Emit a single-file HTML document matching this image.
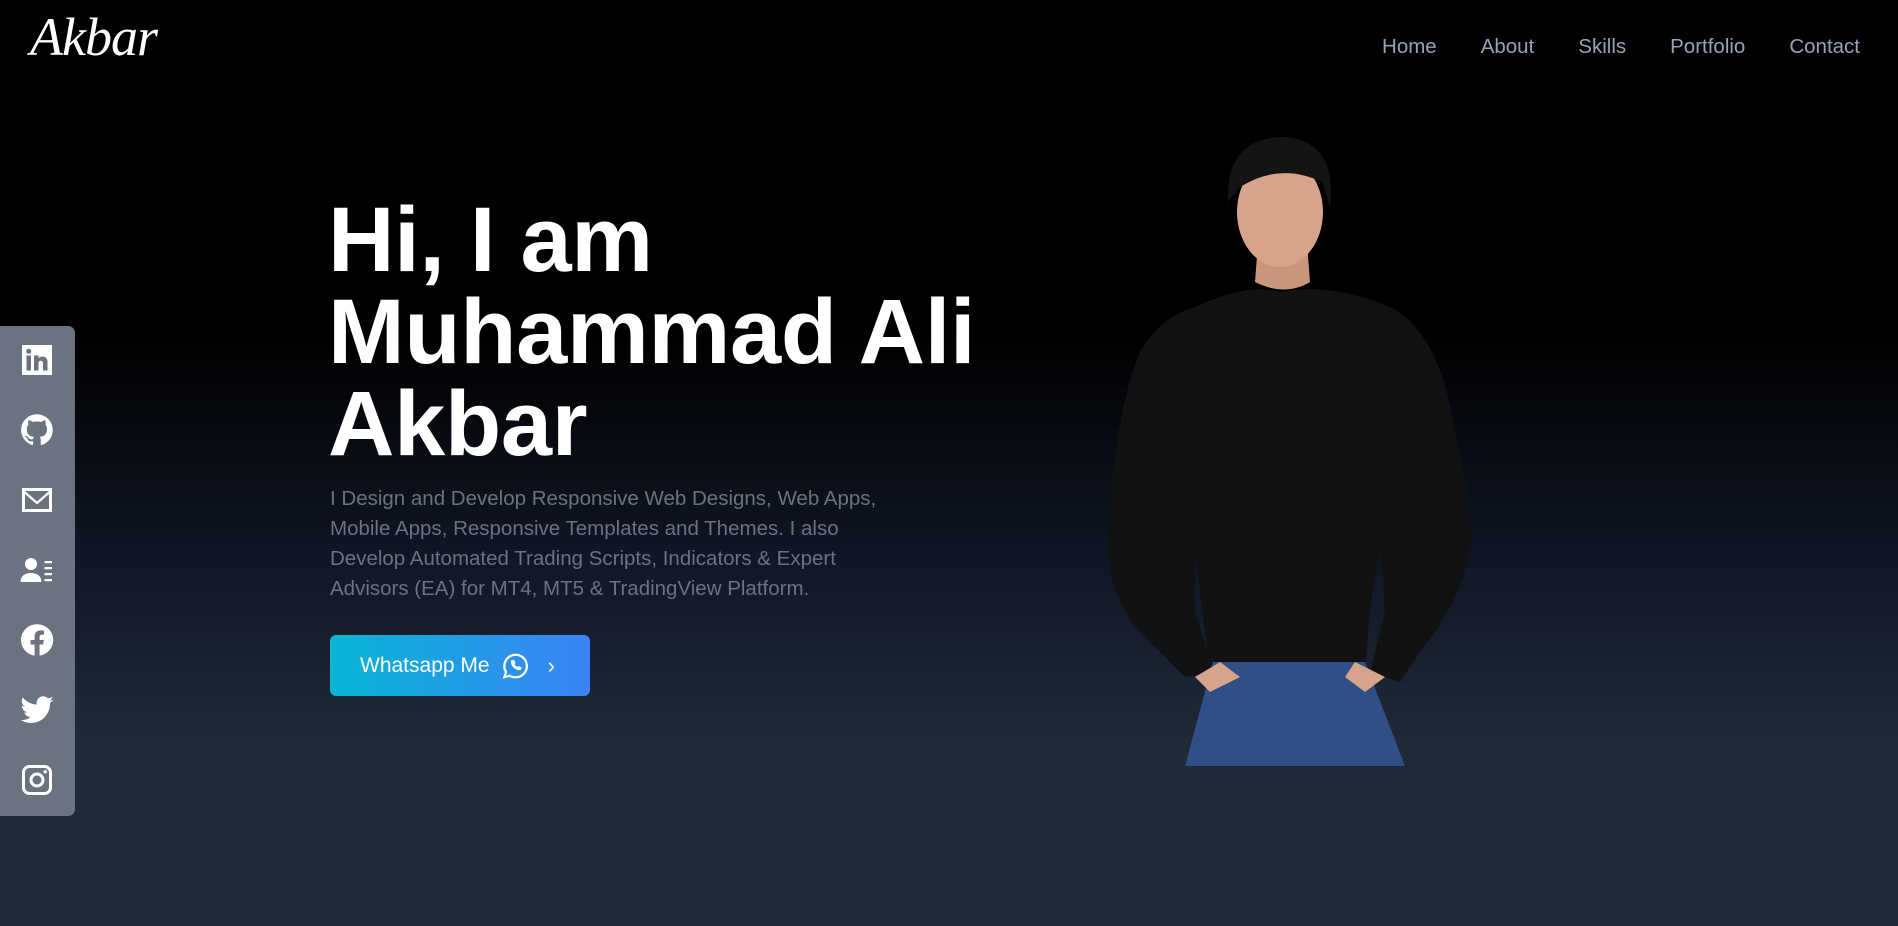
<!DOCTYPE html>
<html><head><meta charset="utf-8"><style>
*{margin:0;padding:0;box-sizing:border-box}
body{width:1898px;height:926px;overflow:hidden;font-family:"Liberation Sans",sans-serif;background:linear-gradient(180deg,#000 0%,#000 36%,#111827 62%,#1f2937 80%,#1f2937 100%);position:relative}
.logo{position:absolute;left:30px;top:6px;font-family:"Liberation Serif",serif;font-style:italic;font-size:54px;color:#fff;letter-spacing:-1px}
nav{position:absolute;top:35px;right:38px;display:flex;gap:44px;font-size:20.5px;color:#94a3b8}
.side{position:absolute;left:0;top:326px;width:75px;height:490px;background:#6b7280;border-radius:0 7px 7px 0}
.side svg{position:absolute;left:19px;width:36px;height:36px;fill:#fff}
h1{position:absolute;left:328px;top:194px;font-size:92px;line-height:92px;color:#fff;font-weight:bold;letter-spacing:-0.3px}
p{position:absolute;left:330px;top:484px;width:556px;font-size:20.5px;line-height:30px;color:#6b7280}
.btn{position:absolute;left:330px;top:635px;width:260px;height:61px;border-radius:6px;background:linear-gradient(90deg,#06b6d4,#3b82f6);color:#fff;font-size:21px;display:flex;align-items:center;padding-left:30px}
</style></head><body>
<div class="logo">Akbar</div>
<nav><span>Home</span><span>About</span><span>Skills</span><span>Portfolio</span><span>Contact</span></nav>
<div class="side">
<svg style="top:16px" viewBox="0 0 24 24"><path d="M2 2h20v20H2z M5 9v10h3V9z M6.5 4.5a1.7 1.7 0 100 3.4 1.7 1.7 0 000-3.4z M10 9v10h3v-5c0-2 3-2 3 0v5h3v-6c0-4-5-4-6-2V9z" fill-rule="evenodd"/></svg>
<svg style="top:86px" viewBox="0 0 24 24"><path d="M12 1.5a10.5 10.5 0 00-3.3 20.5c.5.1.7-.2.7-.5v-2c-3 .6-3.6-1.3-3.6-1.3-.5-1.2-1.2-1.5-1.2-1.5-1-.7.1-.7.1-.7 1.1.1 1.6 1.1 1.6 1.1 1 1.6 2.5 1.2 3.1.9.1-.7.4-1.2.7-1.4-2.4-.3-4.9-1.2-4.9-5.3 0-1.2.4-2.1 1.1-2.9-.1-.3-.5-1.4.1-2.8 0 0 .9-.3 2.9 1.1a10 10 0 015.3 0c2-1.4 2.9-1.1 2.9-1.1.6 1.4.2 2.5.1 2.8.7.8 1.1 1.7 1.1 2.9 0 4.1-2.5 5-4.9 5.2.4.3.7 1 .7 2v3c0 .3.2.6.7.5A10.5 10.5 0 0012 1.5z"/></svg>
<svg style="top:156px" viewBox="0 0 24 24"><path d="M2 4h20v16H2z M4 6v12h16V6z M4 6l8 7 8-7v2l-8 7-8-7z" fill-rule="evenodd"/></svg>
<svg style="top:226px" viewBox="0 0 24 24"><circle cx="8" cy="8" r="4"/><path d="M1 20c0-4 3-6 7-6s7 2 7 6z M17 6h5v1.5h-5z M17 10h5v1.5h-5z M17 14h5v1.5h-5z M17 18h5v1.5h-5z"/></svg>
<svg style="top:296px" viewBox="0 0 24 24"><path d="M12 1.5a10.5 10.5 0 00-1.6 20.9V15H7.7v-3h2.7V9.7c0-2.6 1.6-4.1 4-4.1 1.1 0 2.3.2 2.3.2v2.6h-1.3c-1.3 0-1.7.8-1.7 1.6V12h2.9l-.5 3h-2.4v7.4A10.5 10.5 0 0012 1.5z"/></svg>
<svg style="top:366px" viewBox="0 0 24 24"><path d="M23 5c-.8.4-1.7.6-2.6.7.9-.6 1.6-1.4 2-2.5-.9.5-1.9.9-2.9 1.1A4.5 4.5 0 0011.8 8.4 12.8 12.8 0 012.5 3.7a4.5 4.5 0 001.4 6 4.5 4.5 0 01-2-.6c0 2.2 1.5 4 3.6 4.4-.7.2-1.4.2-2 .1.6 1.8 2.2 3.1 4.2 3.1A9 9 0 011 18.6 12.8 12.8 0 007.9 20.6c8.3 0 12.8-6.9 12.8-12.8v-.6c.9-.6 1.7-1.4 2.3-2.2z"/></svg>
<svg style="top:436px" viewBox="0 0 24 24"><path d="M7 2h10a5 5 0 015 5v10a5 5 0 01-5 5H7a5 5 0 01-5-5V7a5 5 0 015-5z M7 4a3 3 0 00-3 3v10a3 3 0 003 3h10a3 3 0 003-3V7a3 3 0 00-3-3z M12 7a5 5 0 110 10 5 5 0 010-10z M12 9a3 3 0 100 6 3 3 0 000-6z" fill-rule="evenodd"/><circle cx="17.5" cy="6.5" r="1.2"/></svg>
</div>
<h1>Hi, I am<br>Muhammad Ali<br>Akbar</h1>
<p>I Design and Develop Responsive Web Designs, Web Apps, Mobile Apps, Responsive Templates and Themes. I also Develop Automated Trading Scripts, Indicators &amp; Expert Advisors (EA) for MT4, MT5 &amp; TradingView Platform.</p>
<div class="btn">Whatsapp Me
<svg style="margin-left:10px" width="30" height="30" viewBox="0 0 24 24" fill="none" stroke="#fff" stroke-width="1.8"><path d="M3.5 21l1.3-4.3A9 9 0 1112 21a9 9 0 01-4.5-1.2z"/><path d="M9 8c0 3.5 3 7 7 7l1-1.5-2-1-1 .8c-1.2-.5-2.3-1.6-2.8-2.8l.8-1-1-2z" fill="#fff" stroke-width="0.8"/></svg>
<span style="margin-left:18px;font-size:22px">›</span></div>
<svg style="position:absolute;left:1100px;top:132px" width="390" height="634" viewBox="0 0 390 634">
<path d="M95 175 Q150 150 180 160 Q230 150 290 175 Q340 200 355 300 Q375 380 370 420 Q360 470 320 520 L300 550 L270 540 L285 480 L280 420 Q270 460 265 540 L110 540 Q100 460 95 420 L95 480 L115 540 L85 545 L40 500 Q5 460 8 400 Q15 280 40 220 Q60 185 95 175 Z" fill="#121212"/>
<path d="M113 530 L265 530 L305 634 L85 634 Z" fill="#2f4f86"/>
<path d="M120 530 L95 545 L110 560 L140 545 Z M255 530 L285 545 L265 560 L245 545 Z" fill="#d6a48a"/>
<path d="M160 85 L205 85 L210 150 Q185 165 155 150 Z" fill="#c8967a"/>
<ellipse cx="180" cy="80" rx="43" ry="55" fill="#d6a48a"/>
<path d="M128 70 Q125 5 185 5 Q238 10 230 75 L222 50 Q180 30 140 55 Z" fill="#141414"/>
</svg>
</body></html>
